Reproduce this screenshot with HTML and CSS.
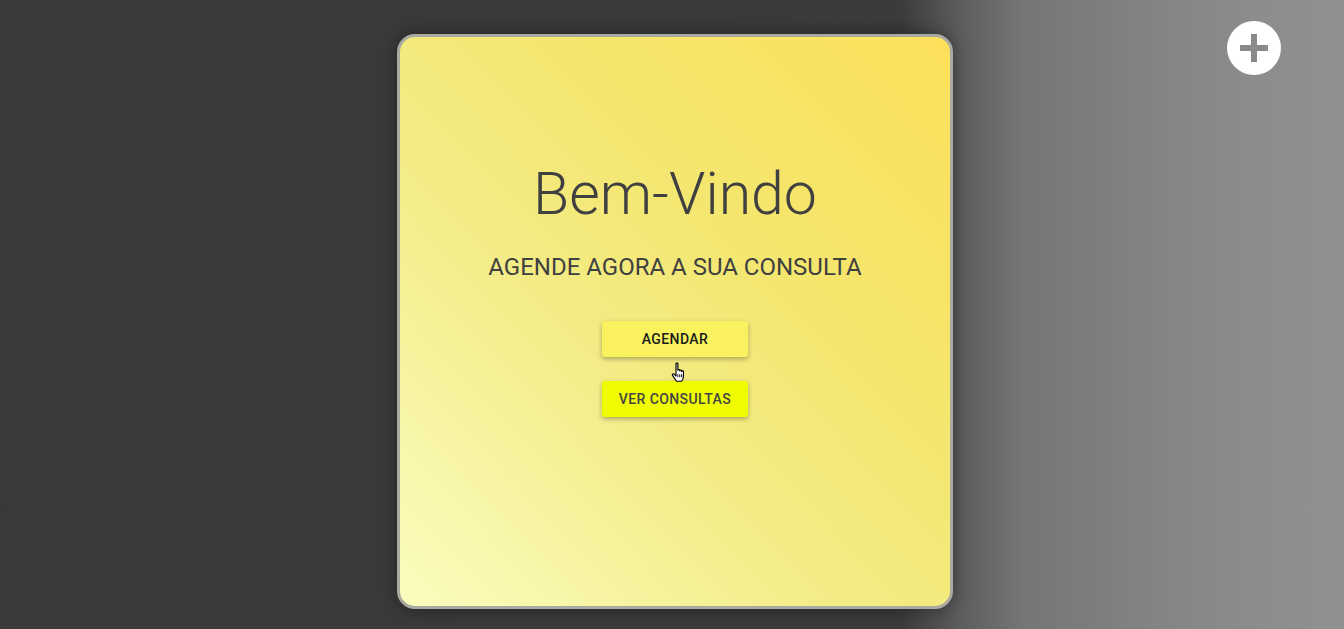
FILE: index.html
```html
<!DOCTYPE html>
<html lang="pt">
<head>
<meta charset="utf-8">
<title>Bem-Vindo</title>
<link rel="stylesheet" href="styles.css">
</head>
<body>
<div class="page">
  <main class="card">
    <h1 class="title">Bem-Vindo</h1>
    <p class="subtitle">AGENDE AGORA A SUA CONSULTA</p>
    <div class="actions">
      <button class="btn btn-primary">AGENDAR</button>
      <button class="btn btn-secondary">VER CONSULTAS</button>
    </div>
    <svg class="cursor" width="17" height="21" viewBox="0 0 14 18">
      <path d="M4 1.5 C4 0.7 5.6 0.7 5.6 1.5 V7 C5.6 6.2 7.2 6.2 7.2 7 V7.6 C7.2 6.8 8.8 6.8 8.8 7.6 V8.2 C8.8 7.4 10.4 7.4 10.4 8.2 V12 C10.4 14 9.6 15.5 8.8 16.5 H4.4 L1 11.5 C0.4 10.6 1.6 9.6 2.4 10.4 L4 12 Z" fill="#fff" stroke="#000" stroke-width="1" stroke-linejoin="round"/>
      <path d="M5.6 10.5 V13 M7.2 10.5 V13 M8.8 10.5 V13" stroke="#000" stroke-width="0.8"/>
    </svg>
  </main>
  <button class="fab" aria-label="Adicionar">
    <svg width="28" height="28" viewBox="0 0 28 28"><path d="M11 0h6v11h11v6H17v11h-6V17H0v-6h11z" fill="#8a8a8a"/></svg>
  </button>
</div>
</body>
</html>
```
FILE: styles.css
```css
html, body {
  margin: 0;
  padding: 0;
  height: 100%;
}
body {
  font-family: Roboto, "Liberation Sans", sans-serif;
  background: linear-gradient(90deg, #3a3838 0%, #3c3a3a 67%, #5e5d5d 71.5%, #767575 76%, #828182 84%, #8c8b8c 92%, #929192 100%);
  overflow: hidden;
}
.page {
  height: 629px;
  display: flex;
  justify-content: center;
  align-items: flex-start;
  padding-left: 6px;
  box-sizing: border-box;
}
.card {
  position: relative;
  margin-top: 34px;
  width: 556px;
  height: 575px;
  box-sizing: border-box;
  border: 3px solid #a9aba2;
  border-radius: 18px;
  background: linear-gradient(to top right, #fbfdbf 0%, #f3ec86 40%, #f4e66e 65%, #fde05a 100%);
  box-shadow: 0 0 18px rgba(0, 0, 0, 0.4);
  display: flex;
  flex-direction: column;
  align-items: center;
  padding-top: 121px;
}
.title {
  margin: 0;
  font-size: 59px;
  line-height: 72px;
  font-weight: 300;
  color: #404040;
}
.subtitle {
  margin: 23px 0 0;
  font-size: 24px;
  line-height: 28px;
  font-weight: 400;
  color: #404040;
}
.actions {
  margin-top: 40px;
  display: flex;
  flex-direction: column;
  gap: 24px;
}
.btn {
  width: 146px;
  height: 36px;
  border: none;
  border-radius: 3px;
  font-family: Roboto, "Liberation Sans", sans-serif;
  font-size: 14px;
  font-weight: 500;
  letter-spacing: 0.4px;
  box-shadow: 0 2px 5px rgba(0, 0, 0, 0.3);
  padding: 0;
}
.btn-primary {
  background: #f9f25e;
  color: #1a1a1a;
}
.btn-secondary {
  background: #effd00;
  color: #444;
}
.cursor {
  position: absolute;
  left: 271px;
  top: 325px;
}
.fab {
  position: absolute;
  left: 1227px;
  top: 21px;
  width: 54px;
  height: 54px;
  border-radius: 50%;
  border: none;
  background: #fff;
  display: flex;
  align-items: center;
  justify-content: center;
  padding: 0;
}
```
